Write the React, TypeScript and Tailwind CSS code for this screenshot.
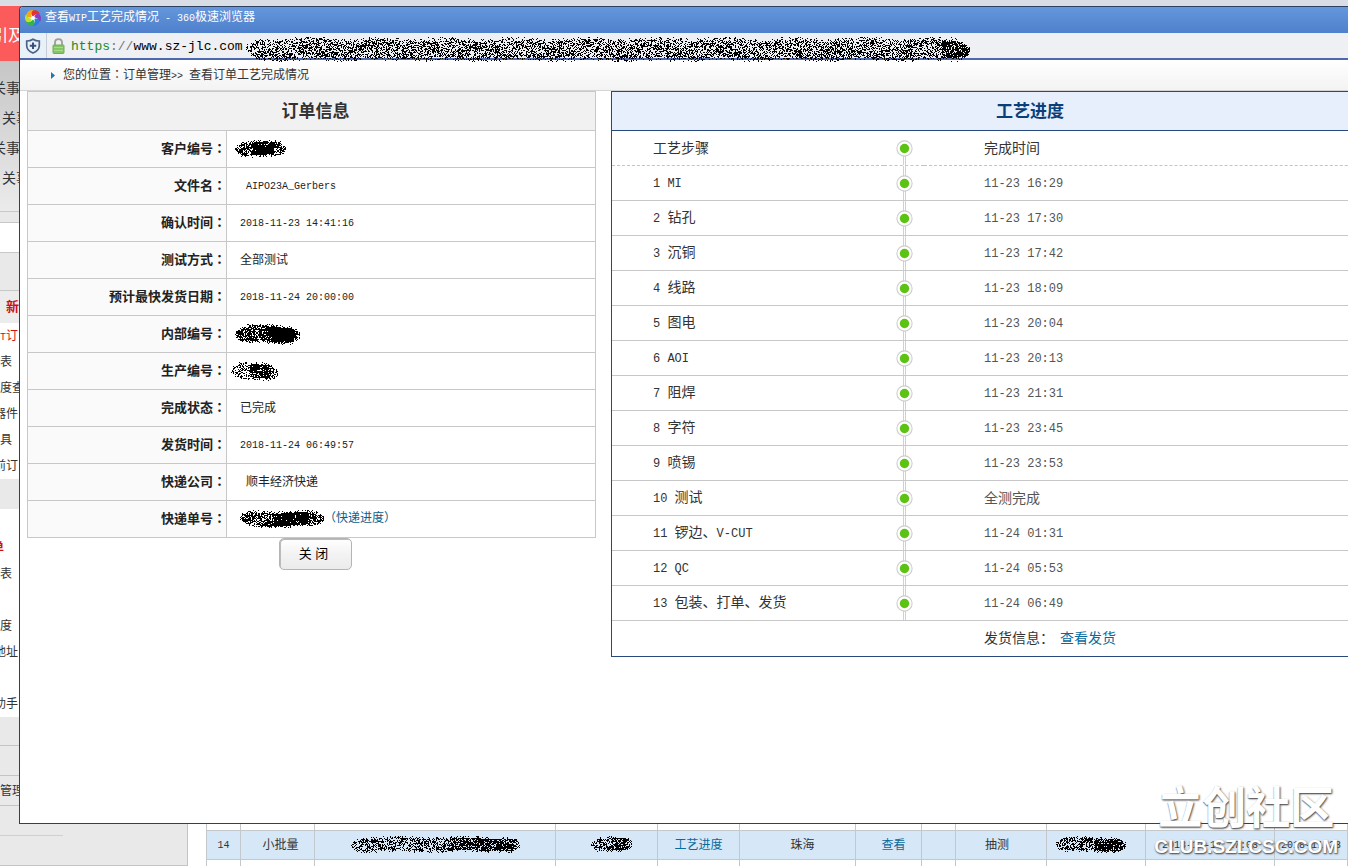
import React from "react";

const CJK = "font-['Liberation_Sans','Noto_Sans_CJK_SC',sans-serif]";

/* Sets Latin runs in a half-width monospace face next to full-width characters. */
function Mix({ children, size = "sm" }: { children: string; size?: "sm" | "md" }) {
  const parts = children.split(/([\x20-\x7e]+|：)/);
  const mono =
    size === "sm"
      ? "font-['Liberation_Mono',monospace] text-[10px] whitespace-pre"
      : "font-['Liberation_Mono',monospace] text-[12px] whitespace-pre";
  return (
    <>
      {parts.map((p, i) =>
        p === "：" ? (
          <span key={i} className="font-['Noto_Sans_CJK_TC',sans-serif]">{p}</span>
        ) : i % 2 ? (
          <span key={i} className={mono}>{p}</span>
        ) : (
          p
        )
      )}
    </>
  );
}

/* Speckled redaction mark, generated from a seed. */
function Scribble({ w, h, seed, density = 0.5, core = 0.5, className = "" }: {
  w: number; h: number; seed: number; density?: number; core?: number; className?: string;
}) {
  const d = React.useMemo(() => {
    let s = seed * 7919 + 17;
    const rnd = () => {
      s = (s * 1664525 + 1013904223) % 4294967296;
      return s / 4294967296;
    };
    let out = "";
    for (let y = 0; y < h; y++) {
      for (let x = 0; x < w; x++) {
        const wob = Math.sin(x / 11 + seed) * h * 0.05;
        const ny = Math.abs((y + 0.5 - h / 2 + wob) / (h / 2));
        const edge = Math.min(1, Math.sqrt((Math.min(x, w - x) + 1) / (h * 0.6)));
        const jag = 0.28 * rnd();
        const r = rnd();
        if (ny > edge - jag) continue;
        const dark = x / w > core && x / w < core + 0.4 && ny < 0.7 ? 0.3 : 0;
        const clump = 0.1 * Math.sin(x / 6 + seed * 2) * Math.cos(y / 3 + x / 17);
        const fade = ny > 0.7 ? 0.7 : 1;
        if (r < (density + dark + clump) * fade) out += `M${x} ${y}h1v1h-1z`;
      }
    }
    return out;
  }, [w, h, seed, density, core]);
  return (
    <svg width={w} height={h} viewBox={`0 0 ${w} ${h}`} shapeRendering="crispEdges" aria-hidden="true" className={`inline-block shrink-0 align-middle ${className}`}>
      <path d={d} fill="#000" />
    </svg>
  );
}

function BrowserLogo() {
  const colors = ["#e8322c", "#8a3fc0", "#2b7de0", "#35b34a", "#c3dd2c", "#f8a51b"];
  return (
    <svg width="16" height="16" viewBox="-8 -8 16 16" aria-hidden="true">
      <circle r="5" fill="#fff" />
      {colors.map((c, i) => (
        <path key={c} d="M0 -1.5C-2.6 -3.6 -2 -7 0.6 -7.6C4 -8 6.6 -5.6 6.8 -3.6C4.6 -4.6 2 -3.8 0 -1.5Z" fill={c} transform={`rotate(${i * 60})`} />
      ))}
      <circle r="1.7" fill="#fff" />
    </svg>
  );
}

function ShieldIcon() {
  return (
    <svg width="16" height="16" viewBox="0 0 16 16" fill="none" aria-hidden="true">
      <path d="M8 1.2C6.2 2.4 4 3 1.7 3V7.5C1.7 11 4.3 13.6 8 15C11.7 13.6 14.3 11 14.3 7.5V3C12 3 9.8 2.4 8 1.2Z" stroke="#4a6288" strokeWidth="1.7" />
      <path d="M8 4.6V11M4.8 7.8H11.2" stroke="#34507c" strokeWidth="2" />
    </svg>
  );
}

function LockIcon() {
  return (
    <svg width="13" height="16" viewBox="0 0 13 16" aria-hidden="true">
      <path d="M3 7.5V4.6C3 2.4 4.4 1.2 6.5 1.2S10 2.4 10 4.6V7.5" fill="none" stroke="#9a9f9a" strokeWidth="1.8" />
      <rect x="1" y="7" width="11" height="8.5" rx="0.8" fill="#86c566" stroke="#6fb04f" />
      <path d="M2 9.5H11M2 12.5H11" stroke="#a6dc8a" />
    </svg>
  );
}

type SideItem = { text: string; className?: string };

const topItems = ["关事", "关事", "关事", "关事"];
const orderItems: SideItem[] = [
  { text: "T订", className: "text-[#c11]" },
  { text: "表" }, { text: "度查" }, { text: "器件" }, { text: "具" }, { text: "前订" },
];
const moreItems: SideItem[] = [
  { text: "单", className: "text-[#c11] font-bold -ml-2" },
  { text: "表" }, { text: "" }, { text: "度" }, { text: "地址" }, { text: "" }, { text: "助手" },
];

function SideList({ items }: { items: SideItem[] }) {
  return (
    <ul>
      {items.map((it, i) => (
        <li key={i} className={`h-[26px] leading-[26px] whitespace-nowrap ${it.className ?? ""}`}>
          <span className={it.text === "器件" || it.text === "前订" || it.text === "地址" || it.text === "助手" ? "-ml-1.5" : ""}>
            <Mix>{it.text}</Mix>
          </span>
        </li>
      ))}
    </ul>
  );
}

function Sidebar() {
  return (
    <aside className="w-[188px] shrink-0 border-r border-[#c4c4c4] bg-[#e9e9e9] text-[12px] text-[#333]">
      <div className="h-1.5 bg-[#dde2ea]" />
      <div className="h-[55px] bg-[#fb5b5b] pt-[18px] text-[16px] leading-6 text-white">
        <span className="-ml-2">引及</span>
      </div>
      <div className="h-[150px] bg-linear-to-b from-[#c6c6c6] to-[#ebebeb] pt-3 text-[14px]">
        {topItems.map((t, i) => (
          <div key={i} className="h-[30px] leading-[30px]">
            <span className={i % 2 ? "ml-0.5" : "-ml-2"}>{t}</span>
          </div>
        ))}
      </div>
      <div className="h-3 border-y border-[#c8c8c8]" />
      <div className="h-[29px] bg-white" />
      <div className="h-[39px] border-y border-[#c8c8c8]" />
      <div className="h-8 bg-[#ececec] pl-1.5 text-[13px] leading-8 font-bold text-[#c11]">新</div>
      <div className="bg-white"><SideList items={orderItems} /></div>
      <div className="h-[30px]" />
      <div className="bg-white pt-[26px]"><SideList items={moreItems} /></div>
      <div className="h-[29px] border-b border-[#c4c4c4]" />
      <div className="h-[30px] border-b border-[#c4c4c4]" />
      <div className="h-[30px] border-b border-[#c4c4c4] leading-[30px]">管理</div>
      <div className="mr-[124px] h-[30px] border-b border-[#d0d0d0]" />
      <div className="h-[30px] border-b border-[#c4c4c4]" />
    </aside>
  );
}

const cell = "border border-[#c2c8cc] p-0";

function OrdersTable() {
  return (
    <table className="w-full table-fixed border-collapse text-center text-[12px] leading-4 text-[#333]">
      <colgroup>
        <col className="w-[34px]" /><col className="w-[74px]" /><col className="w-[241px]" /><col className="w-[102px]" />
        <col className="w-[82px]" /><col className="w-[116px]" /><col className="w-[66px]" /><col className="w-[34px]" />
        <col className="w-[91px]" /><col className="w-[99px]" /><col className="w-[129px]" /><col />
      </colgroup>
      <tbody>
        <tr className="h-[29px]">
          {Array.from({ length: 12 }, (_, i) => <td key={i} className={cell} />)}
        </tr>
        <tr className="h-[29px] bg-[#d6e8f7]">
          <td className={cell}><Mix>14</Mix></td>
          <td className={`${cell} pl-1.5`}>小批量</td>
          <td className={cell}><Scribble w={169} h={17} seed={4} core={0.58} density={0.5} /></td>
          <td className={`${cell} pl-2.5`}><Scribble w={41} h={17} seed={5} core={0.5} /></td>
          <td className={cell}><a href="#progress" className="text-[#0a6a9c]">工艺进度</a></td>
          <td className={`${cell} pl-2.5`}>珠海</td>
          <td className={`${cell} pl-2.5`}><a href="#view" className="text-[#0a6a9c]">查看</a></td>
          <td className={cell} />
          <td className={`${cell} pr-2`}>抽测</td>
          <td className={`${cell} pr-2.5`}><Scribble w={70} h={17} seed={6} core={0.55} density={0.55} /></td>
          <td className={`${cell} whitespace-nowrap`}><Mix>2018-11-17 17:03</Mix></td>
          <td className={`${cell} overflow-hidden pl-1.5 text-left whitespace-nowrap`}><Mix>2018-11-23 20:00</Mix></td>
        </tr>
        <tr className="h-[7px]">
          {Array.from({ length: 12 }, (_, i) => <td key={i} className="border-x border-[#c2c8cc] p-0" />)}
        </tr>
      </tbody>
    </table>
  );
}

const infoRows: { label: string; value: React.ReactNode; pad: string }[] = [
  { label: "客户编号：", value: <Scribble w={51} h={18} seed={11} density={0.68} core={0.35} />, pad: "pl-2" },
  { label: "文件名：", value: <Mix>AIPO23A_Gerbers</Mix>, pad: "pl-[19px]" },
  { label: "确认时间：", value: <Mix>2018-11-23 14:41:16</Mix>, pad: "pl-[13px]" },
  { label: "测试方式：", value: "全部测试", pad: "pl-[13px]" },
  { label: "预计最快发货日期：", value: <Mix>2018-11-24 20:00:00</Mix>, pad: "pl-[13px]" },
  { label: "内部编号：", value: <Scribble w={65} h={21} seed={12} density={0.72} core={0.5} />, pad: "pl-2" },
  { label: "生产编号：", value: <Scribble w={47} h={19} seed={13} density={0.56} core={0.4} />, pad: "pl-1" },
  { label: "完成状态：", value: "已完成", pad: "pl-[13px]" },
  { label: "发货时间：", value: <Mix>2018-11-24 06:49:57</Mix>, pad: "pl-[13px]" },
  { label: "快递公司：", value: "顺丰经济快递", pad: "pl-[19px]" },
  {
    label: "快递单号：",
    value: (
      <>
        <Scribble w={84} h={18} seed={14} density={0.66} core={0.4} />
        <a href="#express" className="text-[#0a5f8c]">（快递进度）</a>
      </>
    ),
    pad: "pl-[13px]",
  },
];

function OrderInfo() {
  return (
    <section className="w-[569px] shrink-0">
      <table className="w-full table-fixed border-collapse border border-[#c8c8c8] text-[12px] leading-4 text-[#222]">
        <colgroup><col className="w-[199px]" /><col /></colgroup>
        <thead>
          <tr className="h-[39px] bg-[#f1f1f1]">
            <th colSpan={2} className="border border-[#c8c8c8] pt-0.5 pl-2 text-[17px] leading-6 font-bold text-[#333]">订单信息</th>
          </tr>
        </thead>
        <tbody>
          {infoRows.map((r) => (
            <tr key={r.label} className="h-[37px]">
              <th scope="row" className="border border-[#c8c8c8] bg-[#fafafa] p-0 pb-0.5 text-right text-[13px] font-bold">
                <Mix>{r.label}</Mix>
              </th>
              <td className={`border border-[#c8c8c8] py-0 ${r.pad}`}>{r.value}</td>
            </tr>
          ))}
        </tbody>
      </table>
      <div className="flex justify-center pl-2">
        <button type="button" className="h-8 w-[73px] rounded-[5px] border border-[#b4b4b4] bg-linear-to-b from-white via-[#f3f3f3] to-[#ebebeb] pr-1 text-[13px] text-black shadow-[inset_1px_1px_0_#bbb]">
          关 闭
        </button>
      </div>
    </section>
  );
}

const steps: [string, string][] = [
  ["1 MI", "11-23 16:29"], ["2 钻孔", "11-23 17:30"], ["3 沉铜", "11-23 17:42"], ["4 线路", "11-23 18:09"],
  ["5 图电", "11-23 20:04"], ["6 AOI", "11-23 20:13"], ["7 阻焊", "11-23 21:31"], ["8 字符", "11-23 23:45"],
  ["9 喷锡", "11-23 23:53"], ["10 测试", "全测完成"], ["11 锣边、V-CUT", "11-24 01:31"], ["12 QC", "11-24 05:53"],
  ["13 包装、打单、发货", "11-24 06:49"],
];

function Node({ first = false }: { first?: boolean }) {
  return (
    <svg width="40" height="34" viewBox="0 0 40 34" className="block" aria-hidden="true">
      <path d={first ? "M19.5 17V34M21.5 17V34" : "M19.5 0V34M21.5 0V34"} stroke="#cfd1cf" />
      <circle cx="20.5" cy="17.5" r="7.6" fill="#fff" stroke="#cdcdcd" strokeWidth="1.1" />
      <circle cx="20.5" cy="17.5" r="4.7" fill="#5cc314" />
    </svg>
  );
}

function Progress() {
  return (
    <section className="min-w-[838px] flex-1 border border-[#27497e]">
      <h2 className="h-[39px] border-b border-[#27497e] bg-[#e7eefc] text-center text-[17px] leading-10 font-bold text-[#0c3f78]">工艺进度</h2>
      <table className="w-full table-fixed border-separate border-spacing-0 text-left text-[14px] leading-5 text-[#333]">
        <colgroup><col className="w-[272px]" /><col className="w-10" /><col /></colgroup>
        <thead>
          <tr>
            <th className="border-b border-dashed border-[#c4c4c4] py-0 pl-[41px] font-normal">工艺步骤</th>
            <th className="border-b border-dashed border-[#c4c4c4] p-0"><Node first /></th>
            <th className="border-b border-dashed border-[#c4c4c4] py-0 pl-[60px] font-normal">完成时间</th>
          </tr>
        </thead>
        <tbody>
          {steps.map(([name, time]) => (
            <tr key={name}>
              <td className="border-b border-[#c8c8c8] py-0 pl-[41px]"><Mix size="md">{name}</Mix></td>
              <td className="border-b border-[#c8c8c8] p-0"><Node /></td>
              <td className="border-b border-[#c8c8c8] py-0 pl-[60px] text-[#555]"><Mix size="md">{time}</Mix></td>
            </tr>
          ))}
          <tr className="h-[35px]">
            <td /><td />
            <td className="pt-0 pb-0.5 pl-[60px]">发货信息：<a href="#delivery" className="ml-1.5 text-[#0a6a9c]">查看发货</a></td>
          </tr>
        </tbody>
      </table>
    </section>
  );
}

function PopupWindow() {
  return (
    <div className="absolute top-1.5 right-0 left-[19px] h-[818px] overflow-hidden rounded-tl-sm border border-r-0 border-[#2c405f] bg-white">
      <header className="flex h-[26px] items-center gap-1 bg-linear-to-b from-[#6497dc] to-[#4f80cc] pb-1 pl-[5px] text-[12px] leading-4 text-white">
        <BrowserLogo />
        <h1><Mix>查看WIP工艺完成情况 - 360极速浏览器</Mix></h1>
      </header>
      <div className="relative flex h-[27px] items-center border-b-2 border-[#4e68ad] bg-[#eff0f4]">
        <div className="flex h-full w-[27px] items-center justify-center border-r border-[#c4cdd8] bg-[#e8f0f8]"><ShieldIcon /></div>
        <div className="flex h-full items-center gap-1.5 pl-[5px]">
          <LockIcon />
          <span className="pt-0.5 font-['Liberation_Mono',monospace] text-[13px] leading-5 text-black">
            <span className="text-[#1d8a1d]">https</span><span className="text-[#777]">://</span>www.sz-jlc.com
          </span>
        </div>
        <Scribble w={724} h={25} seed={21} density={0.48} core={0.96} className="absolute top-1 left-[226px]" />
      </div>
      <nav className="flex h-[31px] items-center border-b border-[#d4d4d4] bg-linear-to-b from-white to-[#f3f3f3] pl-[31px] text-[12px] leading-4 text-[#333]">
        <svg width="4" height="7" viewBox="0 0 4 7" aria-hidden="true"><path d="M0 0L4 3.5L0 7Z" fill="#1f78a8" /></svg>
        <span className="pl-2"><Mix>{"您的位置：订单管理>> 查看订单工艺完成情况"}</Mix></span>
      </nav>
      <main className="flex items-start gap-[15px] pl-[7px]">
        <OrderInfo />
        <Progress />
      </main>
    </div>
  );
}

export default function App() {
  return (
    <div className={`relative min-h-screen overflow-hidden bg-white ${CJK}`}>
      <div className="absolute top-0 right-0 left-0 h-1.5 bg-[#d9dde6]" />
      <div className="flex h-screen">
        <Sidebar />
        <div className="flex min-w-0 flex-1 flex-col justify-end pl-[18px]">
          <OrdersTable />
        </div>
      </div>
      <PopupWindow />
      <div className="absolute right-2.5 bottom-1.5 text-center font-bold text-white [text-shadow:1px_1px_2px_#555,0_1px_1px_#888]">
        <div className="text-[44px] leading-[50px]">立创社区</div>
        <div className="text-[19px] leading-[26px]">CLUB.SZLCSC.COM</div>
      </div>
    </div>
  );
}
